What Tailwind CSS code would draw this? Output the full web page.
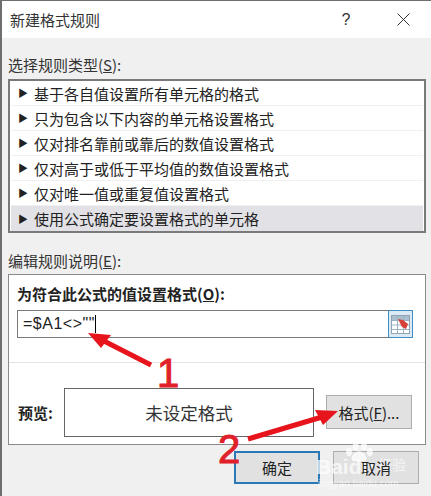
<!DOCTYPE html>
<html lang="zh-CN">
<head>
  <meta charset="UTF-8" />
  <meta name="viewport" content="width=device-width, initial-scale=1" />
  <title>新建格式规则</title>
  <script src="https://cdn.jsdelivr.net/npm/@tailwindcss/browser@4"></script>
</head>
<body class="m-0 bg-[#f0f0f0]">
  <div class="relative w-[431px] h-[496px] overflow-hidden bg-[#f0f0f0] border-l-2 border-t border-[#6e6e6e] text-[15px] leading-none text-[#222] font-['Noto_Sans_CJK_SC','Liberation_Sans',sans-serif]">
    <!-- Title bar -->
    <header class="h-[37px] bg-white flex items-center pl-[8px]">
      <span class="text-[15px] text-[#333] flex-1">新建格式规则</span>
      <span class="w-[20px] text-center text-[16px] text-[#333] font-['Liberation_Sans',sans-serif]">?</span>
      <button class="w-[54px] ml-[20px] mr-[1px] flex justify-center" aria-label="关闭">
        <svg width="13" height="13" viewBox="0 0 13 13" class="stroke-[#333]"><path d="M.5.5l12 12M12.5.5l-12 12" fill="none" stroke-width="1"/></svg>
      </button>
    </header>

    <div class="pl-[6px] pr-[3px]">
      <!-- Rule type -->
      <p class="h-[41px] pt-[19px] text-[#333]">选择规则类型(<u>S</u>):</p>
      <ul class="w-[418px] h-[154px] border-2 border-[#7a7a7a] bg-white px-[1px]">
        <li class="h-[25px] flex items-center pl-[7px] gap-[6px] border-b border-[#f0f0f0]"><span class="text-[10px]">▶</span>基于各自值设置所有单元格的格式</li>
        <li class="h-[25px] flex items-center pl-[7px] gap-[6px] border-b border-[#f0f0f0]"><span class="text-[10px]">▶</span>只为包含以下内容的单元格设置格式</li>
        <li class="h-[25px] flex items-center pl-[7px] gap-[6px] border-b border-[#f0f0f0]"><span class="text-[10px]">▶</span>仅对排名靠前或靠后的数值设置格式</li>
        <li class="h-[25px] flex items-center pl-[7px] gap-[6px] border-b border-[#f0f0f0]"><span class="text-[10px]">▶</span>仅对高于或低于平均值的数值设置格式</li>
        <li class="h-[25px] flex items-center pl-[7px] gap-[6px] border-b border-[#f0f0f0]"><span class="text-[10px]">▶</span>仅对唯一值或重复值设置格式</li>
        <li class="h-[25px] flex items-center pl-[7px] gap-[6px] bg-[#e1e1e6]"><span class="text-[10px]">▶</span>使用公式确定要设置格式的单元格</li>
      </ul>

      <!-- Rule description -->
      <p class="h-[41px] pt-[20px] text-[#333]">编辑规则说明(<u>E</u>):</p>
      <section class="w-[418px] h-[171px] border border-[#8a8a8a] bg-white">
        <div class="h-[88px] border-b border-[#e4e4e4] pl-[8px] pt-[10px]">
          <p class="font-bold text-[#222] h-[25px] pt-[1px]">为符合此公式的值设置格式(<u>O</u>):</p>
          <div class="w-[396px] h-[28px] border border-[#7a7a7a] flex items-center justify-between font-['Liberation_Sans',sans-serif] text-[16px]">
            <span class="pl-[5px] tracking-[0.5px] flex items-center">=$A1&lt;&gt;""<span class="w-px h-[18px] bg-black"></span></span>
            <span class="w-[25px] h-[28px] -mr-px border border-[#3f8fc4] bg-[#dceaf5] flex items-center justify-center">
              <svg width="19" height="21" viewBox="0 0 19 21">
                <rect x="0.5" y="1.5" width="18" height="18" fill="#fff" stroke="#8fa3b0"/>
                <rect x="1" y="2" width="17" height="4" fill="#a9bfd0"/>
                <path d="M1 6.5h17M1 11h17M1 15.5h17M6.5 2v17M12.5 2v17" stroke="#9db2c2" fill="none"/>
                <path d="M7 5l5 1 5 4-2 5-4-2z" fill="#d8403a"/>
              </svg>
            </span>
          </div>
        </div>
        <div class="flex pt-[25px] pl-[9px]">
          <span class="w-[46px] font-bold self-center mb-[1px]">预览:</span>
          <div class="w-[250px] h-[49px] border border-[#666] flex items-center justify-center text-[#333] text-[17.5px]">未设定格式</div>
          <button class="w-[86px] h-[34px] ml-[12px] mt-[7px] border border-[#adadad] bg-[#e1e1e1] text-[#222] text-center">格式(<u>F</u>)...</button>
        </div>
      </section>

      <!-- Dialog buttons -->
      <div class="flex pl-[226px] pt-[6px] gap-[13px]">
        <button class="w-[86px] h-[33px] border-2 border-[#2a78b5] bg-[#e1e1e1] text-[#222]">确定</button>
        <button class="w-[86px] h-[33px] border border-[#adadad] bg-[#e1e1e1] text-[#222]"><span class="relative z-10">取消</span></button>
      </div>
    </div>

    <!-- Red annotations over the dialog -->
    <svg class="absolute left-[-2px] top-[-1px]" width="431" height="496" viewBox="0 0 431 496">
      <path d="M151 365L100 339" stroke="#e8141c" stroke-width="5" fill="none"/>
      <path d="M88 333l23 2-10 13z" fill="#e8141c"/>
      <path d="M248 439L322 417" stroke="#e8141c" stroke-width="5" fill="none"/>
      <path d="M338 411l-23-1 8 15z" fill="#e8141c"/>
    </svg>
    <span class="absolute left-[155px] top-[352px] text-[40px] leading-none [-webkit-text-stroke:1px_#e0202a] text-[#e0202a] font-['Liberation_Sans',sans-serif]">1</span>
    <span class="absolute left-[216px] top-[428px] text-[40px] leading-none [-webkit-text-stroke:1px_#e0202a] text-[#e0202a] font-['Liberation_Sans',sans-serif]">2</span>

    <!-- Watermark -->
    <svg class="absolute left-[342px] top-[441px]" width="30" height="20" viewBox="0 0 36 24" fill="#fff" fill-opacity="0.75">
      <ellipse cx="6" cy="12" rx="3.5" ry="5"/><ellipse cx="14" cy="5" rx="3.5" ry="5"/><ellipse cx="24" cy="5" rx="3.5" ry="5"/><ellipse cx="31" cy="12" rx="3.5" ry="5"/>
      <path d="M18 11c5 0 9 5 9 9s-5 3-9 3-9 1-9-3 4-9 9-9z"/>
    </svg>
    <span class="absolute left-[314px] top-[455px] text-[21px] leading-none font-bold text-white/70 font-['Liberation_Sans',sans-serif]">Baidu</span>
    <span class="absolute left-[376px] top-[456px] text-[14px] leading-none text-white/70">经验</span>
    <span class="absolute left-[316px] top-[478px] text-[10px] leading-none text-white/60 font-['Liberation_Sans',sans-serif]">jingyan.baidu.com</span>
  </div>
</body>
</html>
